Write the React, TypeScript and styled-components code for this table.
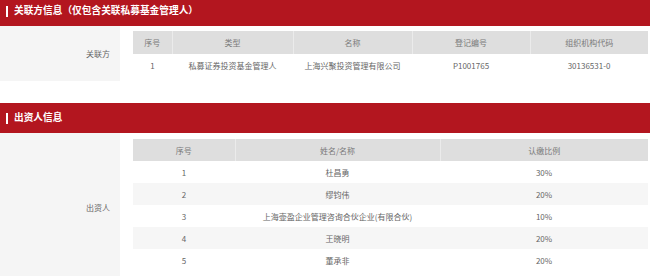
import styled, { createGlobalStyle } from "styled-components";

const GlobalStyle = createGlobalStyle`
  body {
    margin: 0;
    background: #ffffff;
    font-family: "Noto Sans CJK SC", "Noto Sans", sans-serif;
  }
`;

interface Column {
  title: string;
  width: number;
}

interface SectionProps {
  title: string;
  label: string;
  columns: Column[];
  rows: string[][];
  rowHeight: number;
  padTop: number;
  padBottom: number;
}

const relatedColumns: Column[] = [
  { title: "序号", width: 39 },
  { title: "类型", width: 121 },
  { title: "名称", width: 119 },
  { title: "登记编号", width: 118 },
  { title: "组织机构代码", width: 118 },
];

const relatedRows = [
  ["1", "私募证券投资基金管理人", "上海兴聚投资管理有限公司", "P1001765", "30136531-0"],
];

const investorColumns: Column[] = [
  { title: "序号", width: 102 },
  { title: "姓名/名称", width: 205 },
  { title: "认缴比例", width: 208 },
];

const investorRows = [
  ["1", "杜昌勇", "30%"],
  ["2", "缪钧伟", "20%"],
  ["3", "上海壶盈企业管理咨询合伙企业(有限合伙)", "10%"],
  ["4", "王晓明", "20%"],
  ["5", "董承非", "20%"],
];

function Section({ title, label, columns, rows, rowHeight, padTop, padBottom }: SectionProps) {
  return (
    <SectionWrap>
      <SectionHeader>
        <HeaderBar />
        <HeaderTitle>{title}</HeaderTitle>
      </SectionHeader>
      <SectionBody>
        <LabelCell>{label}</LabelCell>
        <ContentCell padTop={padTop} padBottom={padBottom}>
          <Table>
            <colgroup>
              {columns.map((col) => (
                <col key={col.title} style={{ width: col.width }} />
              ))}
            </colgroup>
            <thead>
              <tr>
                {columns.map((col) => (
                  <HeadCell key={col.title} rowHeight={rowHeight}>
                    {col.title}
                  </HeadCell>
                ))}
              </tr>
            </thead>
            <tbody>
              {rows.map((row, i) => (
                <BodyRow key={i} striped={i % 2 === 1}>
                  {row.map((cell, j) => (
                    <BodyCell key={j} rowHeight={rowHeight}>
                      {cell}
                    </BodyCell>
                  ))}
                </BodyRow>
              ))}
            </tbody>
          </Table>
        </ContentCell>
      </SectionBody>
    </SectionWrap>
  );
}

export default function App() {
  return (
    <Page>
      <GlobalStyle />
      <Section
        title="关联方信息（仅包含关联私募基金管理人）"
        label="关联方"
        columns={relatedColumns}
        rows={relatedRows}
        rowHeight={23}
        padTop={5}
        padBottom={4}
      />
      <Section
        title="出资人信息"
        label="出资人"
        columns={investorColumns}
        rows={investorRows}
        rowHeight={22}
        padTop={6}
        padBottom={10}
      />
    </Page>
  );
}

const Page = styled.div`
  width: 650px;
  margin-top: -4px;
`;

const SectionWrap = styled.section`
  margin-bottom: 22px;
`;

// header styles
const SectionHeader = styled.div`
  height: 30px;
  background-color: #b3161f;
  display: flex;
  align-items: center;
  column-gap: 6px;
  padding-left: 6px;
`;

const HeaderBar = styled.span`
  width: 2px;
  height: 11px;
  background-color: #ffffff;
`;

const HeaderTitle = styled.h3`
  margin: 0;
  color: #ffffff;
  font-size: 9.7px;
  font-weight: 700;
  line-height: 1;
`;

// body styles
const SectionBody = styled.div`
  display: flex;
`;

const LabelCell = styled.div`
  width: 120px;
  flex-shrink: 0;
  background-color: #f5f5f5;
  display: flex;
  align-items: center;
  justify-content: flex-end;
  padding-right: 10px;
  box-sizing: border-box;
  color: #666666;
  font-size: 8px;
`;

const ContentCell = styled.div<{ padTop: number; padBottom: number }>`
  flex: 1;
  padding: ${(p) => p.padTop}px 2px ${(p) => p.padBottom}px 13px;
`;

const Table = styled.table`
  width: 515px;
  border-collapse: collapse;
  table-layout: fixed;
`;

const HeadCell = styled.th<{ rowHeight: number }>`
  height: ${(p) => p.rowHeight}px;
  padding: 0;
  background-color: #dedede;
  color: #7a7a7a;
  font-size: 8px;
  font-weight: 400;
  text-align: center;
  & + & {
    border-left: 1px solid #ebebeb;
  }
`;

const BodyRow = styled.tr<{ striped: boolean }>`
  background-color: ${(p) => (p.striped ? "#f6f6f6" : "#ffffff")};
`;

const BodyCell = styled.td<{ rowHeight: number }>`
  height: ${(p) => p.rowHeight}px;
  padding: 0;
  color: #666666;
  font-size: 8px;
  text-align: center;
  white-space: nowrap;
`;
